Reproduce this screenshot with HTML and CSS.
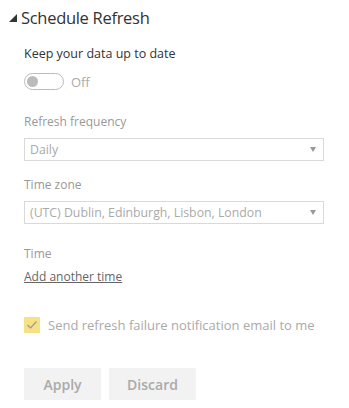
FILE: index.html
```html
<!DOCTYPE html>
<html lang="en">
<head>
  <meta charset="UTF-8">
  <meta name="viewport" content="width=device-width, initial-scale=1.0">
  <link rel="stylesheet" href="styles.css">
  <title>Schedule Refresh</title>
</head>
<body>
  <div class="section">
    <div class="section-header">
      <span class="caret"></span>
      <span class="section-title">Schedule Refresh</span>
    </div>
    <div class="section-body">
      <div class="field-label dark">Keep your data up to date</div>
      <div class="toggle-row">
        <span class="toggle"><span class="knob"></span></span>
        <span class="toggle-text">Off</span>
      </div>

      <div class="field-label">Refresh frequency</div>
      <div class="select">
        <span>Daily</span>
        <span class="arrow"></span>
      </div>

      <div class="field-label">Time zone</div>
      <div class="select">
        <span>(UTC) Dublin, Edinburgh, Lisbon, London</span>
        <span class="arrow"></span>
      </div>

      <div class="field-label time-label">Time</div>
      <a class="add-link" href="#">Add another time</a>

      <div class="check-row">
        <span class="checkbox">
          <svg width="12" height="10" viewBox="0 0 12 10"><path d="M1.5 5 L4.5 8 L10.5 1.5" fill="none" stroke="#999" stroke-width="1.2"/></svg>
        </span>
        <span class="check-text">Send refresh failure notification email to me</span>
      </div>

      <div class="buttons">
        <button class="btn apply">Apply</button>
        <button class="btn discard">Discard</button>
      </div>
    </div>
  </div>
</body>
</html>
```

FILE: styles.css
```css
body {
  margin: 0;
  font-family: 'Open Sans', 'Noto Sans', sans-serif;
  background-color: #fff;
  color: #333;
}

.section {
  padding: 4px 0 0 9px;
}

.section-header {
  display: flex;
  align-items: center;
  height: 26px;
}

.caret {
  width: 0;
  height: 0;
  border-left: 8px solid transparent;
  border-bottom: 8px solid #333;
  margin: 2px 4px 0 0;
}

.section-title {
  font-size: 16.5px;
  color: #333;
  letter-spacing: -0.3px;
}

.section-body {
  padding: 16px 0 0 15px;
  width: 300px;
}

.field-label {
  font-size: 12px;
  color: #999;
  line-height: 16px;
}

.field-label.dark {
  font-size: 12.5px;
  color: #333;
}

.toggle-row {
  display: flex;
  align-items: center;
  height: 17px;
  margin: 11px 0 24px;
}

.toggle {
  display: flex;
  align-items: center;
  width: 34px;
  height: 15px;
  padding: 0 2px;
  border: 1px solid #bbb;
  border-radius: 9px;
}

.knob {
  width: 11px;
  height: 11px;
  border-radius: 50%;
  background-color: #bbb;
}

.toggle-text {
  font-size: 13px;
  color: #aaa;
  margin-left: 7px;
}

.select {
  display: flex;
  align-items: center;
  justify-content: space-between;
  height: 21px;
  border: 1px solid #d9d9d9;
  margin: 8px 0 16px;
  padding: 0 7px 0 5px;
  font-size: 12.3px;
  color: #aaa;
}

.arrow {
  width: 0;
  height: 0;
  border-left: 3px solid transparent;
  border-right: 3px solid transparent;
  border-top: 5px solid #999;
}

.time-label {
  margin-top: 22px;
}

.add-link {
  display: block;
  margin-top: 7px;
  font-size: 12px;
  line-height: 16px;
  color: #666;
  text-decoration: underline;
}

.check-row {
  display: flex;
  align-items: center;
  height: 16px;
  margin-top: 32px;
}

.checkbox {
  width: 16px;
  height: 16px;
  background-color: #f6e187;
  display: flex;
  align-items: center;
  justify-content: center;
}

.check-text {
  font-size: 13px;
  color: #aaa;
  margin-left: 8px;
}

.buttons {
  display: flex;
  gap: 8px;
  margin-top: 35px;
}

.btn {
  height: 32px;
  border: none;
  background-color: #f2f2f2;
  color: #aaa;
  font-family: 'Open Sans', 'Noto Sans', sans-serif;
  font-size: 14px;
  font-weight: 600;
  padding: 0;
}

.apply {
  width: 77px;
}

.discard {
  width: 87px;
}
```
